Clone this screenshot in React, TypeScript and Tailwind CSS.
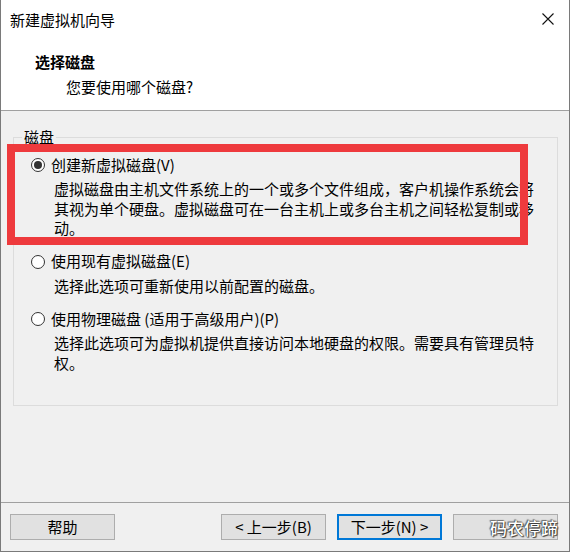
import React from "react";

// Radio glyph, Windows 10 style
const Radio: React.FC<{ checked?: boolean }> = ({ checked }) => (
  <span className="flex h-[14px] w-[14px] shrink-0 items-center justify-center rounded-full border border-[#333333] bg-white">
    {checked && <span className="h-[8px] w-[8px] rounded-full bg-[#333333]" />}
  </span>
);

interface OptionProps {
  label: string;
  desc: string;
  checked?: boolean;
}

const Option: React.FC<OptionProps> = ({ label, desc, checked }) => (
  <div className="flex flex-col">
    <div className="flex h-[20px] items-center gap-[6px] pl-[17px]">
      <Radio checked={checked} />
      <span>{label}</span>
    </div>
    <p className="mt-[4px] w-[486px] pl-[40px] leading-[19.5px] box-content">{desc}</p>
  </div>
);

const Button: React.FC<{ children?: React.ReactNode; focused?: boolean }> = ({
  children,
  focused,
}) => (
  <button
    className={
      focused
        ? "flex h-[26px] w-[105px] items-center justify-center border-2 border-[#0078d7] bg-[#e1e1e1] text-[15px]"
        : "flex h-[26px] w-[105px] items-center justify-center border border-[#adadad] bg-[#e1e1e1] text-[15px]"
    }
  >
    {children}
  </button>
);

export default function App() {
  return (
    <div
      className="relative flex h-[552px] w-[570px] flex-col border-x border-b border-[#7a7a7a] bg-[#f0f0f0] text-[15px] text-black"
      style={{ fontFamily: '"Noto Sans CJK SC", "Noto Sans", sans-serif' }}
    >
      {/* Title + header */}
      <div className="h-[111px] border-b border-[#a0a0a0] bg-white">
        <div className="flex h-[40px] items-center justify-between pl-[9px] pr-[15px]">
          <span className="leading-[20px]">新建虚拟机向导</span>
          <svg width="12" height="12" viewBox="0 0 12 12" className="mt-[-2px]">
            <path d="M0.5 0.5 L11.5 11.5 M11.5 0.5 L0.5 11.5" stroke="#111" strokeWidth="1.1" />
          </svg>
        </div>
        <div className="pt-[12px] leading-[20px]">
          <div className="pl-[34px] font-bold">选择磁盘</div>
          <div className="mt-[5px] pl-[65px]">您要使用哪个磁盘?</div>
        </div>
      </div>

      {/* Body */}
      <div className="flex-1 px-[12px] pt-[16px]">
        <fieldset className="h-[279px] w-[545px] border border-[#dcdcdc] pt-[8px]">
          <legend className="ml-[8px] px-[2px] leading-[20px]">磁盘</legend>
          <div className="flex flex-col gap-[14px]">
            <Option
              checked
              label="创建新虚拟磁盘(V)"
              desc="虚拟磁盘由主机文件系统上的一个或多个文件组成，客户机操作系统会将其视为单个硬盘。虚拟磁盘可在一台主机上或多台主机之间轻松复制或移动。"
            />
            <Option label="使用现有虚拟磁盘(E)" desc="选择此选项可重新使用以前配置的磁盘。" />
            <Option
              label="使用物理磁盘 (适用于高级用户)(P)"
              desc="选择此选项可为虚拟机提供直接访问本地硬盘的权限。需要具有管理员特权。"
            />
          </div>
        </fieldset>
      </div>

      {/* Buttons */}
      <div className="h-[49px] border-t border-[#a0a0a0] pt-[11px]">
        <div className="flex pl-[9px] pr-[11px]">
          <Button>帮助</Button>
          <div className="ml-auto flex gap-[11px]">
            <Button>&lt; 上一步(B)</Button>
            <Button focused>下一步(N) &gt;</Button>
            <Button />
          </div>
        </div>
      </div>

      {/* annotation box */}
      <div className="pointer-events-none absolute left-[6px] top-[144px] h-[101px] w-[521px] border-[8px] border-[#ee3a3d]" />

      {/* watermark */}
      <div className="pointer-events-none absolute left-[489px] top-[517px] text-[17px] font-medium leading-[22px] text-white [text-shadow:0_0_1px_#000,1px_1px_1px_#444,-1px_-1px_1px_#777]">
        码农停蹄
      </div>
    </div>
  );
}
